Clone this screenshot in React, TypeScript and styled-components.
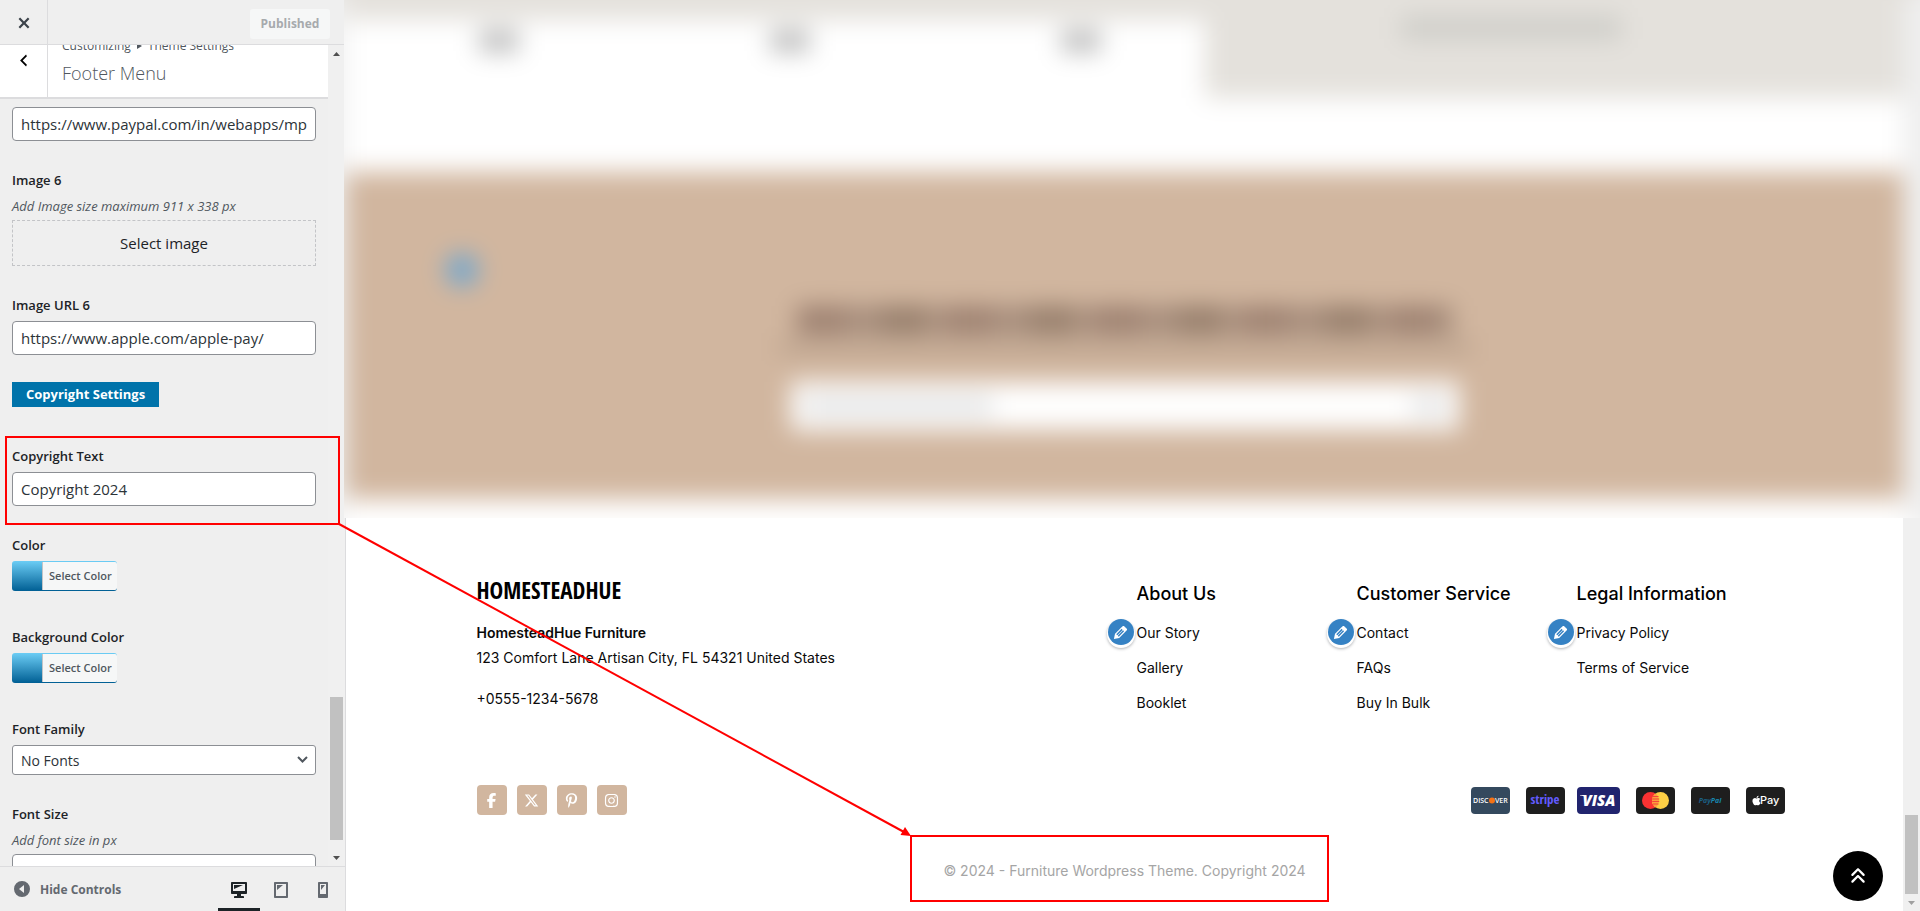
import React from "react";
import styled, { createGlobalStyle } from "styled-components";
import { FaFacebookF, FaXTwitter, FaPinterestP, FaInstagram, FaAnglesUp, FaApple } from "react-icons/fa6";

const ui = `"Open Sans", "Noto Sans", sans-serif`;
const site = `Inter, "Open Sans", sans-serif`;

const GlobalStyle = createGlobalStyle`
  *, *::before, *::after { box-sizing: border-box; }
  body { margin: 0; background: #fff; }
  h1, h2, h3, p, ul { margin: 0; padding: 0; }
  ul { list-style: none; }
  a { color: inherit; text-decoration: none; }
  button { padding: 0; border: 0; background: none; cursor: pointer; }
`;

const Frame = styled.div`
  position: relative;
  display: flex;
  height: 100vh;
  overflow: hidden;
`;

/* ---------- Customizer sidebar ---------- */

const Sidebar = styled.aside`
  display: flex;
  flex-direction: column;
  flex: none;
  width: 346px;
  border-right: 1px solid #dcdcde;
  background: #efefef;
  color: #1d2327;
  font-family: ${ui};
`;

const TopBar = styled.header`
  position: relative;
  z-index: 2;
  display: flex;
  flex: none;
  align-items: flex-end;
  justify-content: space-between;
  height: 45px;
  padding-right: 15px;
  border-bottom: 1px solid #dcdcde;
  background: #efefef;
`;

const SquareButton = styled.button<{ $tall?: boolean }>`
  display: flex;
  justify-content: center;
  align-items: ${(p) => (p.$tall ? "flex-start" : "center")};
  align-self: stretch;
  width: 48px;
  padding-top: ${(p) => (p.$tall ? "7px" : "2px")};
  border-right: 1px solid #dcdcde;
  color: ${(p) => (p.$tall ? "#000" : "#3c434a")};
`;

const Published = styled.button`
  width: 80px;
  height: 30px;
  margin-bottom: 5px;
  border-radius: 3px;
  background: #f6f7f7;
  color: #a7aaad;
  font: 700 12px/30px ${ui};
`;

const SidebarBody = styled.div`
  display: flex;
  flex: 1;
  min-height: 0;
  overflow: hidden;
`;

const Panel = styled.div`
  flex: 1;
  min-width: 0;
`;

const PanelHeader = styled.div`
  position: relative;
  z-index: 1;
  display: flex;
  height: 54px;
  overflow: hidden;
  border-bottom: 2px solid #dcdcde;
  background: #fff;
  color: #50575e;
`;

const PanelTitles = styled.div`
  padding-left: 14px;
  margin-top: -8px;
`;

const Crumbs = styled.p`
  display: flex;
  align-items: center;
  gap: 6px;
  font-size: 12px;
  line-height: 18px;
`;

const PanelTitle = styled.h1`
  margin-top: 4px;
  font-size: 18px;
  font-weight: 300;
  line-height: 28px;
`;

const Controls = styled.div`
  display: flex;
  flex-direction: column;
  gap: 27px;
  margin-top: -20px;
  padding: 0 12px;
`;

const Field = styled.div<{ $below?: number }>`
  position: relative;
  display: flex;
  flex-direction: column;
  align-items: flex-start;
  margin-bottom: ${(p) => p.$below || 0}px;
`;

const Label = styled.label`
  margin-bottom: 4px;
  font-size: 13px;
  font-weight: 600;
  line-height: 24px;
`;

const Hint = styled.p`
  margin-bottom: 4px;
  color: #50575e;
  font-size: 13px;
  font-style: italic;
  line-height: 20px;
`;

const TextInput = styled.input`
  width: 100%;
  height: 34px;
  padding: 0 8px;
  border: 1px solid #8c8f94;
  border-radius: 4px;
  background: #fff;
  color: #2c3338;
  font: 400 15px ${ui};
`;

const SelectImage = styled.button`
  width: 100%;
  height: 46px;
  border: 1px dashed #c3c4c7;
  color: #1d2327;
  font: 400 15px ${ui};
`;

const SectionTag = styled.h2`
  height: 25px;
  padding: 0 14px;
  background: #0073aa;
  color: #fff;
  font-size: 13px;
  font-weight: 700;
  line-height: 25px;
`;

const ColorButton = styled.button`
  display: flex;
  height: 30px;
  padding: 1px 0 1px 30px;
  border-radius: 3px;
  background: linear-gradient(#6ccdf5, #005f94);
`;

const ColorText = styled.span`
  padding: 0 5px 0 6px;
  border-left: 1px solid #c3c4c7;
  border-radius: 0 2px 2px 0;
  background: #f6f7f7;
  color: #50575e;
  font: 600 11px/28px ${ui};
`;

const SelectBox = styled.div`
  position: relative;
  width: 100%;
  height: 30px;
  svg {
    position: absolute;
    top: 10px;
    right: 8px;
    pointer-events: none;
  }
`;

const Select = styled.select`
  width: 100%;
  height: 30px;
  padding: 0 8px;
  appearance: none;
  border: 1px solid #8c8f94;
  border-radius: 3px;
  background: #fff;
  color: #2c3338;
  font: 400 14px ${ui};
`;

const Highlight = styled.span<{ $inset: string }>`
  position: absolute;
  inset: ${(p) => p.$inset};
  border: 2px solid #ff0000;
  pointer-events: none;
`;

const ScrollTrack = styled.div`
  display: flex;
  flex-direction: column;
  flex: none;
  align-items: center;
  justify-content: flex-end;
  width: 17px;
  background: #f0f0f0;
`;

const ScrollThumb = styled.div<{ $height: number; $gap?: number }>`
  width: 13px;
  height: ${(p) => p.$height}px;
  margin-bottom: ${(p) => p.$gap || 0}px;
  background: #c1c1c1;
`;

const ScrollArrow = styled.div<{ $up?: boolean; $color: string }>`
  display: flex;
  align-items: center;
  justify-content: center;
  height: 17px;
  margin-bottom: ${(p) => (p.$up ? "auto" : "0")};
  color: ${(p) => p.$color};
`;

const BottomBar = styled.footer`
  position: relative;
  z-index: 2;
  display: flex;
  flex: none;
  align-items: center;
  justify-content: space-between;
  height: 45px;
  padding: 0 1px 0 12px;
  border-top: 1px solid #dcdcde;
  background: #efefef;
`;

const HideControls = styled.button`
  display: flex;
  align-items: center;
  gap: 8px;
  color: #646970;
  font: 700 12px ${ui};
`;

const Devices = styled.div`
  display: flex;
  align-self: stretch;
`;

const Device = styled.button<{ $active?: boolean }>`
  display: flex;
  align-items: center;
  justify-content: center;
  width: 42px;
  padding-top: ${(p) => (p.$active ? "4px" : "1px")};
  border-bottom: ${(p) => (p.$active ? "3px solid #1d2327" : "0")};
  color: ${(p) => (p.$active ? "#1d2327" : "#646970")};
`;

/* ---------- Site preview ---------- */

const Preview = styled.main`
  display: flex;
  flex-direction: column;
  flex: 1;
  min-width: 0;
  font-family: ${site};
`;

const Obscured = styled.div`
  position: relative;
  z-index: 3;
  flex: none;
  height: 518px;
  margin-left: -2px;
  overflow: hidden;
`;

const Blurred = styled.div`
  margin: -30px;
  border: solid;
  border-width: 30px 47px 30px 32px;
  border-color: #e4e1dc #efefef #fff #f0f0f0;
  filter: blur(12px);
`;

const BlurTop = styled.div`
  display: grid;
  grid-template-columns: minmax(0, 860fr) minmax(0, 699fr);
  height: 172px;
  background: #fff;
`;

const BlurProducts = styled.div`
  display: grid;
  grid-template-columns: repeat(3, 291px);
  align-content: start;
  height: 172px;
  padding: 10px 0 0 133px;
  border-top: 20px solid #e4e1dc;
  div {
    width: 40px;
    height: 22px;
    background: #bdbdbd;
  }
`;

const BlurBanner = styled.div`
  height: 98px;
  padding: 16px 0 0 196px;
  background: #e4e1dc;
  div {
    width: 220px;
    height: 24px;
    background: #cfcec9;
  }
`;

const BlurNewsletter = styled.div`
  position: relative;
  display: flex;
  flex-direction: column;
  align-items: center;
  height: 327px;
  padding-top: 134px;
  background: #d1b69f;
`;

const BlurEdit = styled.div`
  position: absolute;
  top: 82px;
  left: 100px;
  width: 32px;
  height: 32px;
  border-radius: 50%;
  background: #6fa6d0;
`;

const BlurHeading = styled.div`
  width: 656px;
  height: 28px;
  background: repeating-linear-gradient(90deg, #9c8070 0 48px, #a68d7c 48px 84px, #957d6b 84px 130px, #ac9280 130px 148px);
`;

const BlurLine = styled.div`
  width: 694px;
  height: 14px;
  margin-top: 6px;
  background: #bca38e;
`;

const BlurForm = styled.div`
  display: flex;
  align-items: center;
  justify-content: space-between;
  width: 668px;
  height: 48px;
  margin-top: 28px;
  padding: 0 12px;
  background: #fff;
`;

const BlurMark = styled.div<{ $width: number }>`
  width: ${(p) => p.$width}px;
  height: 20px;
  background: #e4e5e6;
`;

const BlurEnd = styled.div`
  height: 19px;
  background: #fff;
`;

const Lower = styled.div`
  display: flex;
  flex: 1;
`;

const SiteFooter = styled.footer`
  position: relative;
  flex: 1;
  min-width: 0;
  padding-top: 57px;
  background: #fff;
  color: #0a0a0a;
  font-size: 14px;
  line-height: 25px;
`;

const Container = styled.div`
  max-width: 1320px;
  margin: 0 auto;
  padding-left: 12px;
`;

const Columns = styled.div`
  display: grid;
  grid-template-columns: 1fr 220px 220px 208px;
`;

const Brand = styled.h2`
  margin-bottom: 15px;
  color: #000;
  font: 700 23px/30px "Open Sans Condensed", "Roboto Condensed", sans-serif;
`;

const Company = styled.p`
  font-weight: 600;
`;

const Phone = styled.p`
  margin-top: 16px;
`;

const ColumnTitle = styled.h3`
  margin-bottom: 7px;
  color: #000;
  font-size: 18px;
  font-weight: 500;
  line-height: 38px;
  white-space: nowrap;
`;

const Links = styled.ul`
  position: relative;
  display: flex;
  flex-direction: column;
  gap: 10px;
`;

const EditButton = styled.button`
  position: absolute;
  top: -1px;
  left: -29px;
  display: flex;
  align-items: center;
  justify-content: center;
  width: 26px;
  height: 26px;
  border-radius: 50%;
  background: #3582c4;
  color: #fff;
  box-shadow: 0 2px 0 1px #fff, 0 3px 3px 1px rgba(60, 67, 74, 0.4);
`;

const FooterRow = styled.div`
  display: flex;
  align-items: center;
  justify-content: space-between;
  margin-top: 70px;
`;

const Socials = styled.div`
  display: flex;
  gap: 10px;
`;

const Social = styled.a`
  display: flex;
  align-items: center;
  justify-content: center;
  width: 30px;
  height: 30px;
  border-radius: 4px;
  background: #d1b69f;
  color: #fff;
  font-size: 15px;
`;

const Payments = styled.ul`
  display: flex;
  align-items: center;
  gap: 16px;
`;

const Card = styled.li<{ $bg: string; $wide?: boolean }>`
  display: flex;
  align-items: center;
  justify-content: center;
  width: ${(p) => (p.$wide ? 43 : 39)}px;
  height: 27px;
  margin-left: ${(p) => (p.$wide ? -4 : 0)}px;
  border-radius: 4px;
  background: ${(p) => p.$bg};
  color: #fff;
  svg {
    display: block;
  }
`;

const Copyright = styled.p`
  position: relative;
  width: fit-content;
  min-width: 369px;
  margin: 44px auto 0;
  color: #a5a5a5;
  line-height: 24px;
  text-align: center;
`;

const ToTop = styled.button`
  position: absolute;
  right: 20px;
  bottom: 10px;
  display: flex;
  align-items: center;
  justify-content: center;
  width: 50px;
  height: 50px;
  border-radius: 50%;
  background: #000;
  color: #fff;
  font-size: 18px;
`;

const Pointer = styled.svg`
  position: absolute;
  top: 0;
  left: 0;
  z-index: 4;
  pointer-events: none;
`;

const Dashicon = ({ d, size = 20 }: { d: string; size?: number }) => (
  <svg width={size} height={size} viewBox="0 0 20 20" fill="currentColor" aria-hidden="true">
    <path d={d} />
  </svg>
);

const icons = {
  close: "M14.95 6.46L11.41 10l3.54 3.54-1.41 1.41L10 11.42l-3.53 3.53-1.42-1.42L8.58 10 5.05 6.47l1.42-1.42L10 8.58l3.54-3.53z",
  back: "M14 5l-5 5 5 5-1 2-7-7 7-7z",
  hide: "M10 2a8 8 0 1 0 0 16 8 8 0 0 0 0-16zM12 6v8l-5-4z",
  desktop: "M3 2h14c.55 0 1 .45 1 1v10c0 .55-.45 1-1 1h-5v2h2c.55 0 1 .45 1 1v1H5v-1c0-.55.45-1 1-1h2v-2H3c-.55 0-1-.45-1-1V3c0-.55.45-1 1-1zm13 9V4H4v7h12zM5 5h9L5 9V5z",
  tablet: "M4 2h12c.55 0 1 .45 1 1v14c0 .55-.45 1-1 1H4c-.55 0-1-.45-1-1V3c0-.55.45-1 1-1zm11 14V4H5v12h10zM6 5h6l-6 5V5z",
  phone: "M6 2h8c.55 0 1 .45 1 1v14c0 .55-.45 1-1 1H6c-.55 0-1-.45-1-1V3c0-.55.45-1 1-1zm7 12V4H7v10h6zM8 5h4l-4 5V5z",
  edit: "M13.89 3.39l2.71 2.72c.46.46.42 1.24.03 1.64l-8.01 8.02-5.56 1.16 1.16-5.58s7.6-7.63 7.99-8.03c.39-.39 1.22-.39 1.68.07zm-2.73 2.79l-5.59 5.61 1.11 1.11 5.54-5.65zm-2.97 8.23l5.58-5.6-1.07-1.08-5.59 5.6z",
};

const Triangle = ({ up, color }: { up?: boolean; color: string }) => (
  <ScrollArrow $up={up} $color={color}>
    <svg width="7" height="4" viewBox="0 0 7 4" fill="currentColor" aria-hidden="true">
      <path d={up ? "M0 4L3.5 0 7 4z" : "M0 0l3.5 4L7 0z"} />
    </svg>
  </ScrollArrow>
);

const UrlField = ({ id, label, value, children }: {
  id: string; label: string; value: string; children?: React.ReactNode;
}) => (
  <Field>
    <Label htmlFor={id}>{label}</Label>
    <TextInput id={id} type="text" defaultValue={value} />
    {children}
  </Field>
);

const ColorField = ({ id, label }: { id: string; label: string }) => (
  <Field $below={7}>
    <Label htmlFor={id}>{label}</Label>
    <ColorButton id={id} type="button"><ColorText>Select Color</ColorText></ColorButton>
  </Field>
);

const menus = [
  { title: "About Us", links: ["Our Story", "Gallery", "Booklet"] },
  { title: "Customer Service", links: ["Contact", "FAQs", "Buy In Bulk"] },
  { title: "Legal Information", links: ["Privacy Policy", "Terms of Service"] },
];

const socials = [
  { name: "Facebook", Icon: FaFacebookF },
  { name: "X", Icon: FaXTwitter },
  { name: "Pinterest", Icon: FaPinterestP },
  { name: "Instagram", Icon: FaInstagram },
];

const PaymentCards = () => (
  <Payments>
    <Card $bg="#34495e">
      <svg width="39" height="27" fill="#fff" fontFamily="Open Sans" fontWeight="600" fontSize="7">
        <text x="2" y="16">DISC</text>
        <circle cx="21" cy="13.5" r="3" fill="#f47216" />
        <text x="24" y="16">VER</text>
      </svg>
    </Card>
    <Card $bg="#1e1e1e">
      <svg width="39" height="27" fill="#635bff" fontFamily="Open Sans Condensed" fontWeight="700" fontSize="13">
        <text x="19" y="17" textAnchor="middle">stripe</text>
      </svg>
    </Card>
    <Card $bg="#21246e" $wide>
      <svg width="43" height="27" fill="#fff" fontFamily="Open Sans" fontWeight="800" fontStyle="italic" fontSize="15">
        <text x="22" y="19" textAnchor="middle">VISA</text>
        <path d="M3 8h5l1 3c-1-1.500-3-2.300-6-2.500z" />
      </svg>
    </Card>
    <Card $bg="#1e1e1e">
      <svg width="39" height="27">
        <circle cx="14.500" cy="13.500" r="8.500" fill="#f93232" />
        <circle cx="24.500" cy="13.500" r="8.500" fill="#fdcf45" />
        <path d="M19.500 6.600a8.500 8.500 0 0 1 0 13.800a8.500 8.500 0 0 1 0-13.800z" fill="#fca03c" />
        <path d="M17 9.500h5.500M16.200 12h7M16.200 14.500h7M17 17h5.500" stroke="#f4453a" />
      </svg>
    </Card>
    <Card $bg="#1e1e1e">
      <svg width="39" height="27" fontFamily="Open Sans" fontWeight="700" fontStyle="italic" fontSize="7">
        <text x="19" y="16" textAnchor="middle" fill="#1b5f82">Pay<tspan fill="#1787b0">Pal</tspan></text>
      </svg>
    </Card>
    <Card $bg="#1e1e1e">
      <svg width="39" height="27" fill="#fff" fontFamily="Inter" fontWeight="500" fontSize="11">
        <FaApple x="5" y="8" width="9" height="10" />
        <text x="14" y="17">Pay</text>
      </svg>
    </Card>
  </Payments>
);

export default function App() {
  return (
    <Frame>
      <GlobalStyle />
      <Sidebar>
        <TopBar>
          <SquareButton type="button" aria-label="Close"><Dashicon d={icons.close} size={22} /></SquareButton>
          <Published type="button">Published</Published>
        </TopBar>
        <SidebarBody>
          <Panel>
            <PanelHeader>
              <SquareButton type="button" $tall aria-label="Back"><Dashicon d={icons.back} size={17} /></SquareButton>
              <PanelTitles>
                <Crumbs>
                  <span>Customizing</span>
                  <svg width="5" height="6" viewBox="0 0 5 6" fill="currentColor" aria-hidden="true"><path d="M0 0l5 3-5 3z" /></svg>
                  <span>Theme Settings</span>
                </Crumbs>
                <PanelTitle>Footer Menu</PanelTitle>
              </PanelTitles>
            </PanelHeader>
            <Controls>
              <UrlField id="url5" label="Image URL 5" value="https://www.paypal.com/in/webapps/mpp/home" />
              <Field>
                <Label htmlFor="image6">Image 6</Label>
                <Hint>Add Image size maximum 911 x 338 px</Hint>
                <SelectImage id="image6" type="button">Select image</SelectImage>
              </Field>
              <UrlField id="url6" label="Image URL 6" value="https://www.apple.com/apple-pay/" />
              <Field $below={10}><SectionTag>Copyright Settings</SectionTag></Field>
              <UrlField id="copy" label="Copyright Text" value="Copyright 2024">
                <Highlight $inset="-8px -24px -19px -7px" />
              </UrlField>
              <ColorField id="color" label="Color" />
              <ColorField id="bgcolor" label="Background Color" />
              <Field>
                <Label htmlFor="family">Font Family</Label>
                <SelectBox>
                  <Select id="family" defaultValue="none"><option value="none">No Fonts</option></Select>
                  <svg width="11" height="9" viewBox="0 0 11 9" fill="none" stroke="#50575e" strokeWidth="2" aria-hidden="true">
                    <path d="M1 2l4.500 4.500L10 2" />
                  </svg>
                </SelectBox>
              </Field>
              <Field>
                <Label htmlFor="size">Font Size</Label>
                <Hint>Add font size in px</Hint>
                <TextInput id="size" type="text" />
              </Field>
            </Controls>
          </Panel>
          <ScrollTrack>
            <Triangle up color="#505050" />
            <ScrollThumb $height={143} $gap={9} />
            <Triangle color="#505050" />
          </ScrollTrack>
        </SidebarBody>
        <BottomBar>
          <HideControls type="button"><Dashicon d={icons.hide} />Hide Controls</HideControls>
          <Devices>
            <Device type="button" $active aria-label="Desktop"><Dashicon d={icons.desktop} /></Device>
            <Device type="button" aria-label="Tablet"><Dashicon d={icons.tablet} /></Device>
            <Device type="button" aria-label="Mobile"><Dashicon d={icons.phone} /></Device>
          </Devices>
        </BottomBar>
      </Sidebar>

      <Preview>
        <Obscured aria-hidden="true">
          <Blurred>
            <BlurTop>
              <BlurProducts><div /><div /><div /></BlurProducts>
              <BlurBanner><div /></BlurBanner>
            </BlurTop>
            <BlurNewsletter>
              <BlurEdit />
              <BlurHeading />
              <BlurLine />
              <BlurForm><BlurMark $width={190} /><BlurMark $width={35} /></BlurForm>
            </BlurNewsletter>
            <BlurEnd />
          </Blurred>
        </Obscured>
        <Lower>
          <SiteFooter>
            <Container>
              <Columns>
                <div>
                  <Brand>HOMESTEADHUE</Brand>
                  <Company>HomesteadHue Furniture</Company>
                  <p>123 Comfort Lane Artisan City, FL 54321 United States</p>
                  <Phone>+0555-1234-5678</Phone>
                </div>
                {menus.map((menu) => (
                  <nav key={menu.title} aria-label={menu.title}>
                    <ColumnTitle>{menu.title}</ColumnTitle>
                    <Links>
                      {menu.links.map((link, i) => (
                        <li key={link}>
                          {i === 0 && (
                            <EditButton type="button" aria-label="Edit menu"><Dashicon d={icons.edit} size={19} /></EditButton>
                          )}
                          <a href="#">{link}</a>
                        </li>
                      ))}
                    </Links>
                  </nav>
                ))}
              </Columns>
              <FooterRow>
                <Socials>
                  {socials.map(({ name, Icon }) => (
                    <Social key={name} href="#" aria-label={name}><Icon /></Social>
                  ))}
                </Socials>
                <PaymentCards />
              </FooterRow>
            </Container>
            <Copyright>
              © 2024 - Furniture Wordpress Theme. Copyright 2024
              <Highlight $inset="-24px -20px -19px -30px" />
            </Copyright>
            <ToTop type="button" aria-label="Back to top"><FaAnglesUp /></ToTop>
          </SiteFooter>
          <ScrollTrack>
            <ScrollThumb $height={79} />
            <Triangle color="#a0a0a0" />
          </ScrollTrack>
        </Lower>
      </Preview>

      <Pointer width="920" height="845" viewBox="0 0 920 845" aria-hidden="true">
        <path d="M339 524L904 832" stroke="#f00" strokeWidth="2" />
        <path d="M911 836l-10.500-1 4.500-8z" fill="#f00" />
      </Pointer>
    </Frame>
  );
}
